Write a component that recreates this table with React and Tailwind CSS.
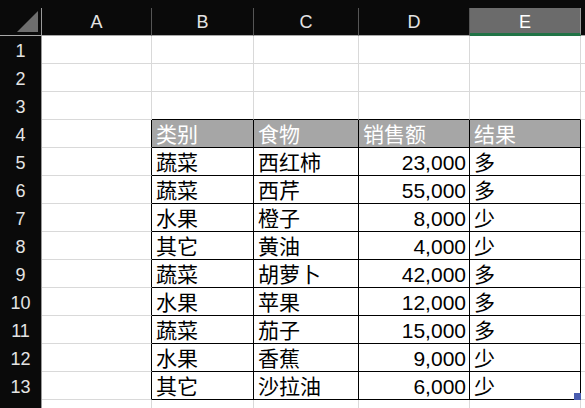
import React from "react";

const cols = ["A", "B", "C", "D", "E"];
const data = [
  null,
  null,
  null,
  ["类别", "食物", "销售额", "结果"],
  ["蔬菜", "西红柿", "23,000", "多"],
  ["蔬菜", "西芹", "55,000", "多"],
  ["水果", "橙子", "8,000", "少"],
  ["其它", "黄油", "4,000", "少"],
  ["蔬菜", "胡萝卜", "42,000", "多"],
  ["水果", "苹果", "12,000", "多"],
  ["蔬菜", "茄子", "15,000", "多"],
  ["水果", "香蕉", "9,000", "少"],
  ["其它", "沙拉油", "6,000", "少"],
  null,
];

const fontStyle = { fontFamily: '"Liberation Sans", "Noto Sans CJK SC", sans-serif' };

function Cell({ r, c }) {
  const inTable = r >= 4 && r <= 13 && c >= 1 && c <= 4;
  const row = data[r - 1];
  const text = inTable && row ? row[c - 1] : "";
  const isHead = r === 4 && inTable;
  const rightBlack = inTable || (c === 0 && r >= 4 && r <= 13);
  const bottomBlack = inTable || (r === 3 && c >= 1 && c <= 4);
  const isNum = inTable && c === 3 && r > 4;
  const last = r === 13 && c === 4;
  return (
    <div
      className={
        "relative h-[28px] border-r border-b flex items-center whitespace-nowrap text-[21px] leading-none " +
        (rightBlack ? "border-r-black " : "border-r-[#d9d9d9] ") +
        (bottomBlack ? "border-b-black " : "border-b-[#d9d9d9] ") +
        (isHead ? "bg-[#a6a6a6] text-white " : "bg-white text-black ") +
        (isNum ? "justify-end pr-[3px] " : "pl-[4px] ")
      }
    >
      <span className="pt-[2px]">{text}</span>
      {last && (
        <div className="absolute -right-[1px] -bottom-[1px] w-[7px] h-[7px] bg-[#4a5db0]" />
      )}
    </div>
  );
}

export default function App() {
  return (
    <div className="w-[585px] h-[408px] overflow-hidden bg-white" style={fontStyle}>
      <div className="grid grid-cols-[42px_110px_102px_105px_111px_111px_1fr]">
        <div className="h-[36px] bg-[#0a0a0a] pt-[8px]">
          <div className="h-[28px] border-r border-b border-r-[#9a9a9a] border-b-[#a8a8a8] flex items-end justify-end pr-[3px] pb-[3px]">
            <svg width="21" height="21" viewBox="0 0 21 21">
              <polygon points="21,0 21,21 0,21" fill="#6e6e6e" />
            </svg>
          </div>
        </div>
        {cols.map((l) => (
          <div key={l} className="h-[36px] bg-[#0a0a0a] pt-[8px]">
            <div
              className={
                "h-[28px] border-r flex items-center justify-center text-[18px] leading-none " +
                (l === "E"
                  ? "bg-[#6b6b6b] border-r-[#9a9a9a] border-b-[3px] border-b-[#217346] text-white pt-[3px]"
                  : "border-r-[#555555] border-b border-b-[#a8a8a8] text-[#e4e4e4] pt-[1px]")
              }
            >
              {l}
            </div>
          </div>
        ))}
        <div className="h-[36px] bg-[#0a0a0a] pt-[8px]">
          <div className="h-[28px] border-b border-b-[#a8a8a8]" />
        </div>
        {Array.from({ length: 14 }, (_, i) => i + 1).map((r) => (
          <React.Fragment key={r}>
            <div className="h-[28px] bg-[#0a0a0a] border-r border-r-[#9a9a9a] flex items-center justify-center text-[18px] leading-none text-[#e4e4e4] pt-[2px]">
              {r <= 13 ? r : ""}
            </div>
            {[0, 1, 2, 3, 4].map((c) => (
              <Cell key={c} r={r} c={c} />
            ))}
            <div className="h-[28px] border-b border-b-[#d9d9d9] bg-white" />
          </React.Fragment>
        ))}
      </div>
    </div>
  );
}
